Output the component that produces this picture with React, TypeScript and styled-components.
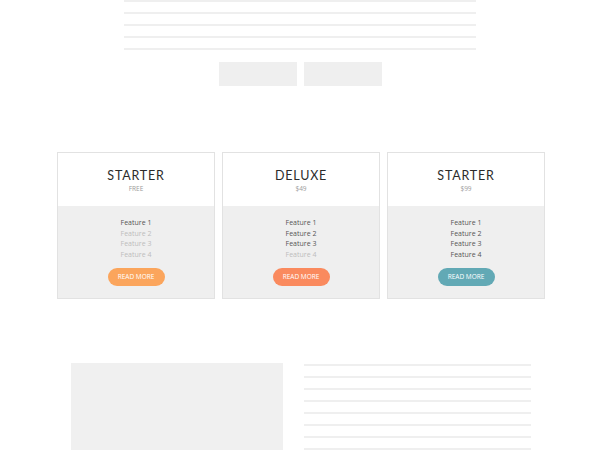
import React from 'react';
import styled, {createGlobalStyle} from 'styled-components';

type Plan = {
  name: string;
  price: string;
  active: number;
  accent: string;
};

const plans: Plan[] = [
  {name: 'Starter', price: 'Free', active: 1, accent: '#fba55c'},
  {name: 'Deluxe', price: '$49', active: 3, accent: '#fa8a5e'},
  {name: 'Starter', price: '$99', active: 4, accent: '#62a9b5'},
];

const features = ['Feature 1', 'Feature 2', 'Feature 3', 'Feature 4'];

const App: React.FC = () => {
  return (
    <>
      <GlobalStyle />
      <Page>
        <TopSection>
          <LineStack>
            {Array.from({length: 5}).map((_, i) => (
              <Rule key={i} />
            ))}
          </LineStack>
          <ButtonRow>
            <GhostButton />
            <GhostButton />
          </ButtonRow>
        </TopSection>

        <PricingRow>
          {plans.map((plan, i) => (
            <Card key={i}>
              <CardHeader>
                <PlanName>{plan.name}</PlanName>
                <PlanPrice>{plan.price}</PlanPrice>
              </CardHeader>
              <CardBody>
                <FeatureList>
                  {features.map((f, j) => (
                    <Feature key={f} $enabled={j < plan.active}>
                      {f}
                    </Feature>
                  ))}
                </FeatureList>
                <ReadMore $accent={plan.accent}>Read more</ReadMore>
              </CardBody>
            </Card>
          ))}
        </PricingRow>

        <BottomSection>
          <ImageBlock />
          <TextLines>
            {Array.from({length: 8}).map((_, i) => (
              <Rule key={i} />
            ))}
          </TextLines>
        </BottomSection>
      </Page>
    </>
  );
};

export default App;

const GlobalStyle = createGlobalStyle`
  html, body {
    margin: 0;
    padding: 0;
    background: #ffffff;
    font-family: 'Open Sans', 'Lato', sans-serif;
  }
`;

const Page = styled.div`
  width: 600px;
  height: 450px;
  overflow: hidden;
  display: flex;
  flex-direction: column;
`;

const TopSection = styled.section`
  display: flex;
  flex-direction: column;
  align-items: center;
`;

const LineStack = styled.div`
  width: 352px;
  display: flex;
  flex-direction: column;
  gap: 10px;
`;

const Rule = styled.div`
  height: 2px;
  background: #efefef;
`;

const ButtonRow = styled.div`
  display: flex;
  gap: 7px;
  margin-top: 12px;
`;

const GhostButton = styled.div`
  width: 78px;
  height: 24px;
  background: #efefef;
`;

const PricingRow = styled.section`
  display: flex;
  justify-content: center;
  gap: 7px;
  margin-top: 66px;
  padding-left: 2px;
`;

const Card = styled.div`
  width: 156px;
  border: 1px solid #e2e2e2;
  display: flex;
  flex-direction: column;
`;

const CardHeader = styled.div`
  height: 53px;
  background: #ffffff;
  display: flex;
  flex-direction: column;
  align-items: center;
  padding-top: 15px;
  box-sizing: border-box;
`;

const PlanName = styled.div`
  font-family: 'Lato', sans-serif;
  font-size: 12.5px;
  line-height: 15px;
  letter-spacing: 0.8px;
  text-transform: uppercase;
  color: #2b2b2b;
`;

const PlanPrice = styled.div`
  margin-top: 1px;
  font-size: 6.5px;
  line-height: 9px;
  text-transform: uppercase;
  color: #9a9a9a;
`;

const CardBody = styled.div`
  height: 92px;
  background: #efefef;
  display: flex;
  flex-direction: column;
  align-items: center;
  padding-top: 12px;
  box-sizing: border-box;
`;

const FeatureList = styled.div`
  display: flex;
  flex-direction: column;
  align-items: center;
`;

const Feature = styled.div<{$enabled: boolean}>`
  font-size: 7px;
  line-height: 10.5px;
  color: ${p => (p.$enabled ? '#555555' : '#bdbdbd')};
`;

const ReadMore = styled.div<{$accent: string}>`
  margin-top: 8px;
  width: 57px;
  height: 18px;
  border-radius: 9px;
  background: ${p => p.$accent};
  color: #ffffff;
  font-size: 6.5px;
  line-height: 18px;
  text-align: center;
  text-transform: uppercase;
`;

const BottomSection = styled.section`
  display: flex;
  gap: 21px;
  margin-top: 64px;
  padding-left: 71px;
`;

const ImageBlock = styled.div`
  width: 212px;
  height: 100px;
  background: #f0f0f0;
`;

const TextLines = styled.div`
  width: 227px;
  display: flex;
  flex-direction: column;
  gap: 10px;
  padding-top: 1px;
`;
